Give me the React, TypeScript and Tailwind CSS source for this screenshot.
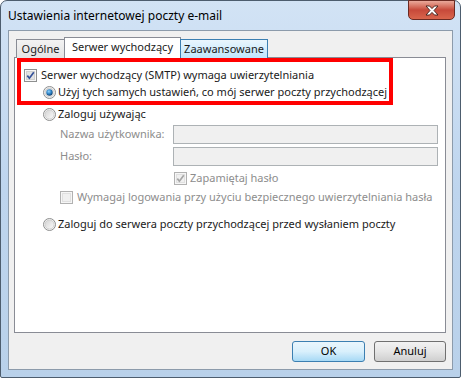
import React from 'react';

const Radio = ({checked = false}: {checked?: boolean}) => (
	<svg width="13" height="13" viewBox="0 0 13 13" className="shrink-0">
		<defs>
			<linearGradient id="rb" x1="0" y1="0" x2="1" y2="1">
				<stop offset="0" stopColor="#d3d3d3" />
				<stop offset="1" stopColor="#fcfcfc" />
			</linearGradient>
			<radialGradient id="rd" cx="0.4" cy="0.35" r="0.7">
				<stop offset="0" stopColor="#8fd3ff" />
				<stop offset="0.55" stopColor="#2a7fc2" />
				<stop offset="1" stopColor="#10365e" />
			</radialGradient>
		</defs>
		<circle cx="6.5" cy="6.5" r="6" fill="#f4f4f4" stroke="#8e8f8f" />
		<circle cx="6.5" cy="6.5" r="4.5" fill="url(#rb)" stroke="#c9c9c9" strokeWidth="0.8" />
		{checked && <circle cx="6.5" cy="6.5" r="3.2" fill="url(#rd)" />}
	</svg>
);

const Check = ({checked = false, disabled = false}: {checked?: boolean; disabled?: boolean}) => (
	<svg width="13" height="13" viewBox="0 0 13 13" className="shrink-0">
		<rect x="0.5" y="0.5" width="12" height="12" fill="#f6f6f6" stroke={disabled ? '#b1b1b1' : '#8e8f8f'} />
		<rect x="2.5" y="2.5" width="8" height="8" fill={disabled ? '#f0f0f0' : '#e2e2e2'} stroke={disabled ? '#e0e0e0' : '#d0d0d0'} />
		{checked && (
			<path
				d="M3.3 6.6 L5.4 9.2 L9.8 3.2"
				fill="none"
				stroke={disabled ? '#a6a6a6' : '#34519a'}
				strokeWidth="1.7"
			/>
		)}
	</svg>
);

const App = () => {
	return (
		<div className="w-[461px] h-[378px] bg-white font-['Noto_Sans',sans-serif] text-[11px] text-[#1a1a1a] select-none">
			<div className="relative w-full h-full flex flex-col border border-[#4d5d6e] rounded-t-[7px] rounded-b-[2px] bg-linear-to-b from-[#d2e3f5] via-[#bed5ee] to-[#b9d1ea] px-[7px] pb-[7px]">
				{/* title bar */}
				<div className="h-[29px] flex items-center text-[12px] text-black">
					Ustawienia internetowej poczty e-mail
				</div>
				<div className="absolute top-[-1px] right-[5px] w-[47px] h-[20px] rounded-b-[5px] border border-[#6b2a22] bg-linear-to-b from-[#e9a99b] via-[#c7493a] to-[#d9654c] flex items-center justify-center">
					<svg width="14" height="11" viewBox="0 0 14 11">
						<path
							d="M1 1 H4.5 L7 3.6 L9.5 1 H13 L9 5.5 L13 10 H9.5 L7 7.4 L4.5 10 H1 L5 5.5 Z"
							fill="#ffffff"
							stroke="#3b1d17"
							strokeWidth="0.9"
						/>
					</svg>
				</div>

				{/* client area */}
				<div className="flex-1 flex flex-col border border-[#8c9bab] bg-[#f0f0f0] pt-[6px] pl-[5px] pr-[6px] pb-[7px]">
					{/* tabs */}
					<div className="relative z-10 flex items-end h-[21px] -mb-px pl-[2px]">
						<div className="w-[49px] h-[19px] border border-b-0 border-[#898c95] bg-linear-to-b from-[#f3f3f3] to-[#e3e3e3] flex items-center justify-center">
							Ogólne
						</div>
						<div className="w-[117px] h-[21px] -ml-px border border-b-0 border-[#898c95] bg-white flex items-center justify-center pb-[2px]">
							Serwer wychodzący
						</div>
						<div className="w-[88px] h-[19px] -ml-px border border-b-0 border-[#3c7fb1] bg-linear-to-b from-[#eaf6fd] to-[#bee6fd] flex items-center justify-center">
							Zaawansowane
						</div>
					</div>

					{/* panel */}
					<div className="h-[276px] border border-[#898c95] bg-white flex flex-col">
						<div className="ml-[2px] w-[376px] h-[47px] border-4 border-[#ff0000] pt-[4px] flex flex-col">
							<div className="h-[18px] flex items-center pl-[3px] gap-[4px]">
								<Check checked />
								<span>Serwer wychodzący (SMTP) wymaga uwierzytelniania</span>
							</div>
							<div className="h-[16px] flex items-center pl-[22px] gap-[2px]">
								<Radio checked />
								<span>Użyj tych samych ustawień, co mój serwer poczty przychodzącej</span>
							</div>
						</div>

						<div className="h-[18px] flex items-center pl-[28px] gap-[2px]">
							<Radio />
							<span>Zaloguj używając</span>
						</div>

						<div className="mt-[2px] h-[19px] flex items-center pl-[45px] text-[#8d8d8d]">
							<span className="w-[113px]">Nazwa użytkownika:</span>
							<div className="w-[265px] h-[19px] border border-[#adb2b5] bg-[#f0f0f0]" />
						</div>
						<div className="mt-[3px] h-[19px] flex items-center pl-[45px] text-[#8d8d8d]">
							<span className="w-[113px]">Hasło:</span>
							<div className="w-[265px] h-[19px] border border-[#adb2b5] bg-[#f0f0f0]" />
						</div>

						<div className="mt-[3px] h-[18px] flex items-center pl-[159px] gap-[3px] text-[#8d8d8d]">
							<Check checked disabled />
							<span>Zapamiętaj hasło</span>
						</div>
						<div className="mt-[1px] h-[18px] flex items-center pl-[45px] gap-[4px] text-[#8d8d8d]">
							<Check disabled />
							<span>Wymagaj logowania przy użyciu bezpiecznego uwierzytelniania hasła</span>
						</div>

						<div className="mt-[9px] h-[18px] flex items-center pl-[28px] gap-[2px]">
							<Radio />
							<span>Zaloguj do serwera poczty przychodzącej przed wysłaniem poczty</span>
						</div>
					</div>

					{/* buttons */}
					<div className="mt-auto flex justify-end gap-[9px]">
						<button className="w-[73px] h-[21px] rounded-[3px] border border-[#3c7fb1] bg-linear-to-b from-[#eaf6fd] via-[#d9f0fc] to-[#a7d9f5] text-black">
							OK
						</button>
						<button className="w-[72px] h-[21px] rounded-[3px] border border-[#707070] bg-linear-to-b from-[#f2f2f2] via-[#e5e5e5] to-[#cfcfcf] text-black">
							Anuluj
						</button>
					</div>
				</div>
			</div>
		</div>
	);
};

export default App;
